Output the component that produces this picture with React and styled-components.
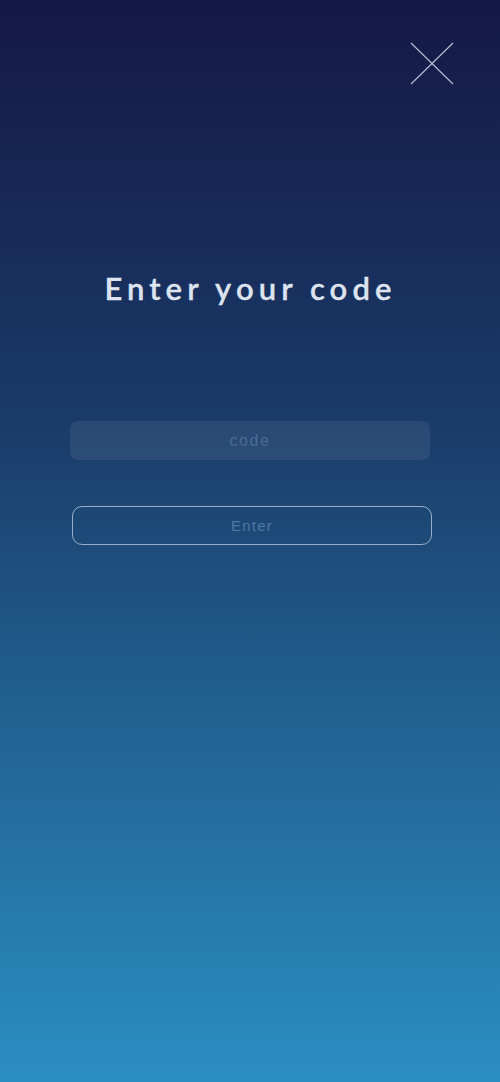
import React from "react";
import styled, { createGlobalStyle } from "styled-components";

const GlobalStyle = createGlobalStyle`
  html, body {
    margin: 0;
    padding: 0;
  }
  body {
    font-family: "Lato", "Open Sans", sans-serif;
  }
`;

const App = () => {
  return (
    <Screen>
      <GlobalStyle />
      <TopBar>
        <CloseButton aria-label="close">
          <svg width="44" height="43" viewBox="0 0 44 43">
            <line x1="1" y1="1" x2="43" y2="42" stroke="#b9c1d6" strokeWidth="1.1" />
            <line x1="43" y1="1" x2="1" y2="42" stroke="#b9c1d6" strokeWidth="1.1" />
          </svg>
        </CloseButton>
      </TopBar>
      <Title>Enter your code</Title>
      <Form>
        <CodeInput placeholder="code" />
        <EnterButton>Enter</EnterButton>
      </Form>
    </Screen>
  );
};

export default App;

const Screen = styled.div`
  width: 500px;
  height: 1082px;
  box-sizing: border-box;
  background: linear-gradient(180deg, #151846 0%, #1a3a68 38%, #21608f 65%, #2b8ec3 100%);
  display: flex;
  flex-direction: column;
  align-items: center;
  overflow: hidden;
`;

const TopBar = styled.div`
  width: 100%;
  display: flex;
  justify-content: flex-end;
  padding: 42px 46px 0 0;
  box-sizing: border-box;
`;

const CloseButton = styled.div`
  width: 44px;
  height: 43px;
  display: flex;
  cursor: pointer;
`;

const Title = styled.h1`
  margin: 185px 0 0;
  font-family: "Lato", sans-serif;
  font-weight: 600;
  font-size: 31px;
  letter-spacing: 5.1px;
  color: #dde3ef;
  line-height: 36px;
  padding-left: 1px;
  -webkit-text-stroke: 0.35px #dde3ef;
`;

const Form = styled.div`
  width: 360px;
  margin-top: 115px;
  display: flex;
  flex-direction: column;
  align-items: center;
`;

const CodeInput = styled.input`
  width: 360px;
  height: 39px;
  box-sizing: border-box;
  border: 0;
  border-radius: 8px;
  background: rgba(255, 255, 255, 0.07);
  text-align: center;
  font-family: "Liberation Sans", Arial, sans-serif;
  font-size: 16px;
  letter-spacing: 1.6px;
  color: #dce2ee;
  outline: none;

  &::placeholder {
    color: #4b6a92;
    opacity: 1;
  }
`;

const EnterButton = styled.div`
  width: 360px;
  height: 39px;
  margin-top: 46px;
  margin-left: 4px;
  box-sizing: border-box;
  border: 1.3px solid rgba(220, 228, 240, 0.65);
  border-radius: 10px;
  display: flex;
  align-items: center;
  justify-content: center;
  font-family: "Liberation Sans", Arial, sans-serif;
  font-size: 15px;
  letter-spacing: 1.2px;
  color: #4f78a2;
  cursor: pointer;
`;
